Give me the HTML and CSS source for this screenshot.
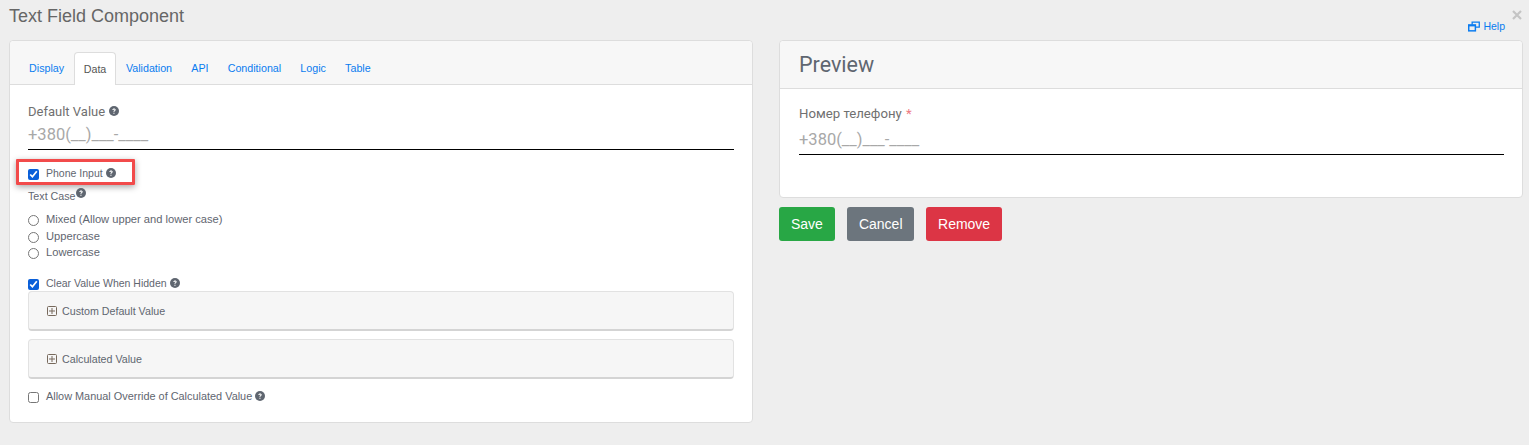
FILE: index.html
```html
<!DOCTYPE html>
<html lang="en">
<head>
<meta charset="utf-8">
<title>Text Field Component</title>
<link rel="stylesheet" href="styles.css">
</head>
<body>
<svg class="defs" width="0" height="0" aria-hidden="true">
  <symbol id="q" viewBox="0 0 24 24"><circle cx="12" cy="12" r="12" fill="#5f6670"/><path d="M8 9.300c.2-2.200 1.900-3.500 4.100-3.500 2.300 0 4 1.400 4 3.400 0 1.700-1 2.400-2.100 3.100-.8.500-1 .9-1 1.700h-2.500c0-1.700.5-2.500 1.700-3.300.9-.6 1.400-.9 1.400-1.500s-.6-1.100-1.400-1.100c-.9 0-1.500.5-1.600 1.300zM10.500 16h2.700v2.600h-2.700z" fill="#fff"/></symbol>
</svg>
<header class="top">
  <h1 class="title">Text Field Component</h1>
  <div class="top-right">
    <svg class="close" viewBox="0 0 10 10" role="img" aria-label="Close"><path d="M1 1l8 8M9 1l-8 8" stroke="#c4c4c4" stroke-width="2.200" fill="none"/></svg>
    <a class="help" href="#"><svg class="help-icon" viewBox="0 0 13 11"><path d="M4.500 3.500V.8h7.700v5.400H8.500" fill="none" stroke="#0a7cf0" stroke-width="1.400"/><rect x=".8" y="3.800" width="7.200" height="6.400" fill="none" stroke="#0a7cf0" stroke-width="1.600"/><rect x=".8" y="3.800" width="7.200" height="1.600" fill="#0a7cf0"/></svg>Help</a>
  </div>
</header>
<main class="columns">
  <section class="card">
    <nav class="tabs">
      <a class="tab" href="#">Display</a>
      <a class="tab active" href="#">Data</a>
      <a class="tab" href="#">Validation</a>
      <a class="tab" href="#">API</a>
      <a class="tab" href="#">Conditional</a>
      <a class="tab" href="#">Logic</a>
      <a class="tab" href="#">Table</a>
    </nav>
    <div class="card-body">
      <label class="field-label">Default Value <svg class="q q-big"><use href="#q"/></svg></label>
      <div class="mask">+380(__)___-____</div>
      <div class="highlight-row">
        <div class="highlight">
          <label class="check"><input type="checkbox" checked>Phone Input <svg class="q"><use href="#q"/></svg></label>
        </div>
      </div>
      <div class="text-case">Text Case<svg class="q q-sup"><use href="#q"/></svg></div>
      <div class="radios">
        <label class="check radio"><input type="radio" name="c">Mixed (Allow upper and lower case)</label>
        <label class="check radio"><input type="radio" name="c">Uppercase</label>
        <label class="check radio"><input type="radio" name="c">Lowercase</label>
      </div>
      <label class="check clear"><input type="checkbox" checked>Clear Value When Hidden <svg class="q"><use href="#q"/></svg></label>
      <div class="panel"><svg class="plus" viewBox="0 0 10 10"><path d="M1.500.5h7a1 1 0 0 1 1 1v7a1 1 0 0 1-1 1h-7a1 1 0 0 1-1-1v-7a1 1 0 0 1 1-1zM5 2v6M2 5h6" fill="none" stroke="#77695c"/></svg>Custom Default Value</div>
      <div class="panel"><svg class="plus" viewBox="0 0 10 10"><path d="M1.500.5h7a1 1 0 0 1 1 1v7a1 1 0 0 1-1 1h-7a1 1 0 0 1-1-1v-7a1 1 0 0 1 1-1zM5 2v6M2 5h6" fill="none" stroke="#77695c"/></svg>Calculated Value</div>
      <label class="check override"><input type="checkbox">Allow Manual Override of Calculated Value <svg class="q"><use href="#q"/></svg></label>
    </div>
  </section>
  <aside class="side">
    <section class="card preview">
      <h2 class="preview-head">Preview</h2>
      <div class="preview-body">
        <label class="field-label">Номер телефону <span class="req">*</span></label>
        <div class="mask">+380(__)___-____</div>
      </div>
    </section>
    <div class="buttons">
      <button class="btn save">Save</button>
      <button class="btn cancel">Cancel</button>
      <button class="btn remove">Remove</button>
    </div>
  </aside>
</main>
</body>
</html>
```
FILE: styles.css
```css
* { box-sizing: border-box; }
html, body { margin: 0; height: 445px; overflow: hidden; }
body { background: #eee; font-family: "Liberation Sans", Arial, sans-serif; color: #5f6670; }
.defs { position: absolute; }
.top { display: flex; justify-content: space-between; height: 40px; padding: 6px 7px 0 9px; }
.title { margin: 0; font-size: 18px; line-height: 20px; font-weight: 400; color: #666; }
.top-right { display: flex; flex-direction: column; align-items: flex-end; }
.close { display: block; width: 10px; height: 10px; margin-top: 4px; }
.help { display: flex; align-items: center; margin: 0 17px 0 0; font-size: 10.5px; line-height: 13px; color: #0a7cf0; text-decoration: none; }
.help-icon { width: 12px; height: 11px; margin-right: 3px; }
.columns { display: grid; grid-template-columns: 744px 744px; column-gap: 26px; padding-left: 9px; align-items: start; }
.card { background: #fff; border: 1px solid #ddd; border-radius: 4px; }
.tabs { display: flex; height: 44px; padding: 11px 9px 0 9.500px; background: #f7f7f7; border-bottom: 1px solid #ddd; border-radius: 4px 4px 0 0; }
.tab { height: 33px; padding: 0 9.600px; font-size: 10.700px; line-height: 32px; color: #0a7cf0; text-decoration: none; white-space: nowrap; }
.tab.active { color: #555; background: #fff; border: 1px solid #ddd; border-bottom: 0; border-radius: 4px 4px 0 0; padding: 0 9px; }
.card-body { height: 337px; padding: 18px 18px 0; }
.field-label { display: block; font-family: Roboto, sans-serif; font-size: 13px; line-height: 17px; color: #707070; }
.mask { height: 30px; padding-top: 4px; border-bottom: 1px solid #000; font-family: Roboto, sans-serif; font-size: 16.500px; line-height: 21px; color: #a8a8a8; }
.q { width: 10px; height: 10px; vertical-align: -1px; margin-left: 1px; }
.q-big { width: 10px; height: 10px; margin-left: 1px; vertical-align: 0; }
.q-sup { vertical-align: 2px; margin-left: 0; }
.highlight-row { display: flex; margin: 9px 0 0 -12px; }
.highlight { width: 119px; height: 26px; padding: 3px 0 0 9px; border: 3px solid #f24b4b; border-radius: 1px; box-shadow: 0 2px 6px rgba(0,0,0,.35); }
.check { display: flex; align-items: center; font-size: 10.500px; line-height: 16px; height: 16px; color: #5f6670; white-space: nowrap; }
.check .q { margin-left: 3px; }
.check input { width: 11px; height: 11px; margin: 3px 7px 0 0; accent-color: #0a5fd9; flex: none; }
.text-case { margin-top: 3px; font-size: 10.700px; line-height: 16px; color: #5f6670; }
.radios { display: flex; flex-direction: column; margin-top: 7px; }
.radio { height: 16.500px; font-size: 11.150px; }
.clear { margin-top: 14px; }
.panel { display: flex; align-items: center; height: 40px; margin-bottom: 8px; padding: 1px 0 0 18px; background: #f6f6f6; border: 1px solid #e2e2e2; border-bottom: 2px solid #d4d4d4; border-radius: 4px; font-size: 10.700px; color: #5f6670; }
.plus { width: 10px; height: 10px; margin-right: 5px; }
.override { margin-top: 9px; font-size: 10.900px; }
.preview { height: 158px; }
.preview-head { height: 48px; margin: 0; padding: 0 19px; background: #f7f7f7; border-bottom: 1px solid #ddd; border-radius: 4px 4px 0 0; font-family: Roboto, sans-serif; font-size: 21.500px; font-weight: 400; line-height: 48px; color: #5f6670; }
.preview-body { padding: 16px 18px 0 19px; }
.preview-body .field-label { margin: 0; font-size: 13.200px; }
.preview-body .mask { height: 33px; padding-top: 7px; }
.req { margin-left: 1px; color: #ee7a82; }
.buttons { display: flex; gap: 12px; margin-top: 9px; }
.btn { height: 34px; padding: 0 11.500px 0 12.500px; border: 0; border-radius: 3px; font-family: "Liberation Sans", Arial, sans-serif; font-size: 14px; color: #fff; }
.save { padding: 0 12px; background: #28a745; }
.cancel { padding: 0 11px 0 12px; background: #6c757d; }
.remove { background: #dc3545; }
```
